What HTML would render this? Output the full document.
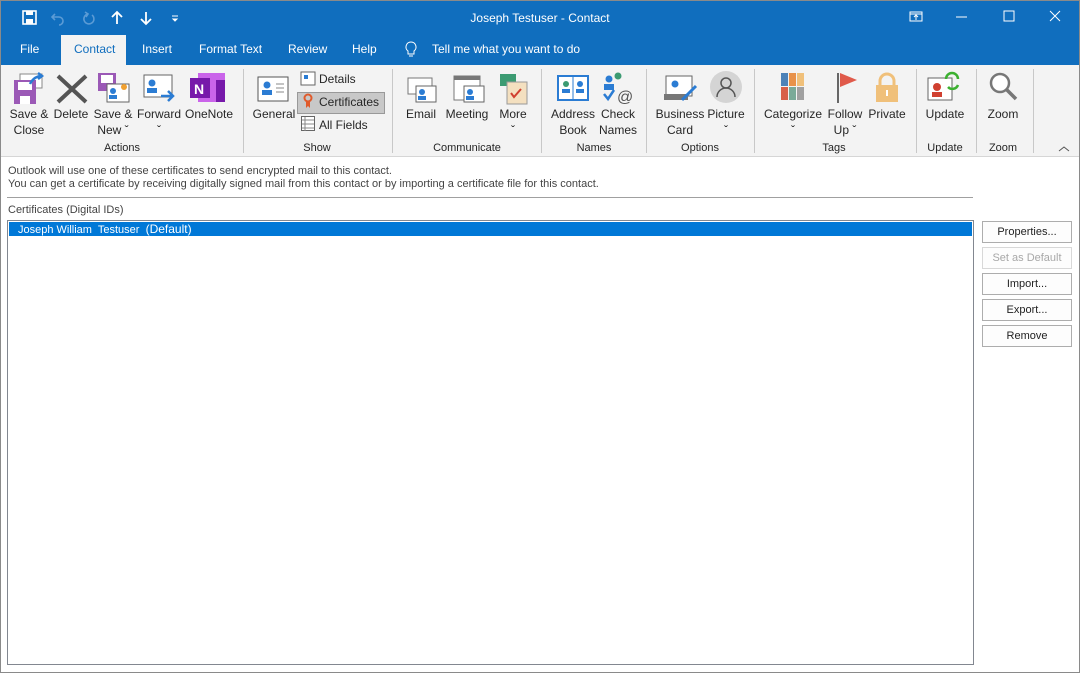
<!DOCTYPE html>
<html><head><meta charset="utf-8"><style>
*{margin:0;padding:0;box-sizing:border-box}
body{width:1080px;height:673px;position:relative;overflow:hidden;background:#fff;font-family:"Liberation Sans",sans-serif;color:#262626}
.a{position:absolute}
.t{position:absolute;font-size:12px;white-space:nowrap;text-align:center;transform:translateX(-50%);line-height:16px}
.g{position:absolute;font-size:11px;transform:translateX(-50%);color:#262626;top:142px}
.sep{position:absolute;top:69px;width:1px;height:84px;background:#c8c8c8}
.tab{position:absolute;top:42px;font-size:12px;color:#fff;white-space:nowrap}
.btn{position:absolute;left:982px;width:90px;height:22px;border:1px solid #adadad;background:#fdfdfd;font-size:11px;text-align:center;line-height:20px;color:#222}
</style></head><body>
<div class="a" style="left:0;top:0;width:1080px;height:673px;border:1px solid #8a8a8a;z-index:5;pointer-events:none"></div>
<div class="a" style="left:0;top:0;width:1080px;height:65px;background:#106ebe"></div>
<svg class="a" style="left:20px;top:9px" width="170" height="18" viewBox="0 0 170 18">
<rect x="3" y="2" width="13" height="13" fill="none" stroke="#fff" stroke-width="1.6"/><rect x="6" y="2" width="7" height="4" fill="#fff"/><rect x="6" y="10" width="7" height="5" fill="#fff"/>
<path d="M35 5 l-3 3 3 3 M32 8 h7 a4 4 0 0 1 0 8" fill="none" stroke="#5b9bd5" stroke-width="1.6"/>
<path d="M72 6 a5 5 0 1 1 -4 -1 M65 3 l3 2 -2 3" fill="none" stroke="#5b9bd5" stroke-width="1.6"/>
<path d="M97 15 V3 M92 8 l5 -5 5 5" fill="none" stroke="#fff" stroke-width="1.8"/>
<path d="M126 3 V15 M121 10 l5 5 5 -5" fill="none" stroke="#fff" stroke-width="1.8"/>
<path d="M152 7 h6 M153 10 l2 2 2 -2z" fill="#fff" stroke="#fff"/>
</svg>
<div class="a" style="left:0;width:1080px;top:11px;text-align:center;color:#fff;font-size:12px">Joseph Testuser - Contact</div>
<svg class="a" style="left:905px;top:9px" width="160" height="16">
<rect x="5" y="3" width="12" height="9" fill="none" stroke="#fff"/><path d="M11 11 V6 M9 8 l2 -2 2 2 M5 5 h12" stroke="#fff" fill="none"/>
<path d="M51 8 h11" stroke="#fff"/>
<rect x="99" y="2" width="10" height="10" fill="none" stroke="#fff"/>
<path d="M145 2 l10 10 M155 2 l-10 10" stroke="#fff"/>
</svg>
<div class="a" style="left:61px;top:35px;width:65px;height:30px;background:#f3f3f3"></div>
<div class="tab" style="left:20px">File</div>
<div class="tab" style="left:74px;color:#106ebe">Contact</div>
<div class="tab" style="left:142px">Insert</div>
<div class="tab" style="left:199px">Format Text</div>
<div class="tab" style="left:288px">Review</div>
<div class="tab" style="left:352px">Help</div>
<svg class="a" style="left:404px;top:41px" width="14" height="18"><path d="M7 1 a5 5 0 0 1 3 9 v3 h-6 v-3 a5 5 0 0 1 3 -9z M5 15 h4" fill="none" stroke="#fff"/></svg>
<div class="tab" style="left:432px">Tell me what you want to do</div>
<div class="a" style="left:0;top:65px;width:1080px;height:92px;background:#f3f3f3;border-bottom:1px solid #d6d6d6"></div>
<div class="a" style="left:297px;top:92px;width:88px;height:22px;background:#c8c8c8;border:1px solid #999"></div>
<svg class="a" style="left:0;top:70px" width="1080" height="38">
<rect x="20" y="4" width="22" height="14" fill="#fff" stroke="#888"/><rect x="14" y="10" width="22" height="24" fill="#9b59b6"/><rect x="18" y="12" width="14" height="8" fill="#fff"/><rect x="20" y="26" width="10" height="8" fill="#fff"/><path d="M30 14 q4 -8 12 -8 M38 3 l4 3 -4 3" stroke="#2b7cd3" stroke-width="2.5" fill="none"/>
<path d="M58 6 L86 32 M86 6 L58 32" stroke="#555" stroke-width="4"/>
<rect x="98" y="3" width="18" height="18" fill="#9b59b6"/><rect x="101" y="5" width="12" height="8" fill="#fff"/><rect x="107" y="14" width="22" height="18" fill="#fff" stroke="#666"/><circle cx="113" cy="21" r="3" fill="#2b7cd3"/><rect x="109" y="25" width="8" height="4" fill="#2b7cd3"/><circle cx="124" cy="17" r="3" fill="#f0a030"/>
<rect x="144" y="5" width="28" height="22" fill="#fff" stroke="#666"/><circle cx="152" cy="13" r="3.5" fill="#2b7cd3"/><rect x="147" y="18" width="10" height="5" fill="#2b7cd3"/><path d="M161 26 h12 M168 21 l5 5 -5 5" stroke="#2b7cd3" stroke-width="2.5" fill="none"/>
<rect x="198" y="3" width="27" height="29" fill="#ca64ea"/><rect x="216" y="10" width="9" height="22" fill="#7719aa"/><rect x="190" y="8" width="20" height="20" fill="#7719aa"/><text x="194" y="24" fill="#fff" font-size="14" font-weight="bold" font-family="Liberation Sans">N</text>
<rect x="258" y="7" width="30" height="24" fill="#fff" stroke="#555"/><circle cx="267" cy="15" r="3.5" fill="#2b7cd3"/><rect x="262" y="20" width="10" height="5" fill="#2b7cd3"/><path d="M276 14 h8 M276 18 h8 M276 22 h8" stroke="#888"/>
<rect x="301" y="2" width="14" height="13" fill="#fff" stroke="#666"/><rect x="304" y="5" width="4" height="4" fill="#2b7cd3"/>
<circle cx="308" cy="28" r="3.5" fill="none" stroke="#e05a2b" stroke-width="2"/><path d="M306 31 v7 l2-2 2 2 v-7" fill="#e05a2b"/>
<rect x="408" y="8" width="24" height="16" fill="#fff" stroke="#777"/><rect x="416" y="16" width="20" height="16" fill="#fff" stroke="#666"/><circle cx="422" cy="22" r="3" fill="#2b7cd3"/><rect x="418" y="26" width="8" height="4" fill="#2b7cd3"/>
<rect x="454" y="6" width="26" height="24" fill="#fff" stroke="#777"/><rect x="454" y="6" width="26" height="4" fill="#777"/><rect x="464" y="16" width="20" height="16" fill="#fff" stroke="#666"/><circle cx="470" cy="22" r="3" fill="#2b7cd3"/><rect x="466" y="26" width="8" height="4" fill="#2b7cd3"/>
<rect x="500" y="4" width="16" height="12" fill="#3c9b72"/><rect x="507" y="12" width="20" height="22" fill="#f4e0c0" stroke="#999"/><path d="M511 23 l3 4 7 -8" stroke="#d04030" stroke-width="2" fill="none"/>
<rect x="558" y="6" width="30" height="24" fill="#fff" stroke="#2b7cd3" stroke-width="2"/><path d="M573 6 v24" stroke="#2b7cd3"/><circle cx="566" cy="14" r="3" fill="#3c9b72"/><circle cx="580" cy="14" r="3" fill="#2b7cd3"/><rect x="562" y="19" width="8" height="4" fill="#2b7cd3"/><rect x="576" y="19" width="8" height="4" fill="#2b7cd3"/>
<circle cx="609" cy="9" r="3.5" fill="#2b7cd3"/><circle cx="618" cy="6" r="3.5" fill="#3c9b72"/><rect x="604" y="14" width="10" height="6" fill="#2b7cd3"/><path d="M604 24 l4 5 6 -9" stroke="#2b7cd3" stroke-width="2.5" fill="none"/><text x="617" y="32" font-size="16" fill="#555" font-family="Liberation Sans">@</text>
<rect x="666" y="6" width="26" height="20" fill="#fff" stroke="#666"/><circle cx="675" cy="14" r="3.5" fill="#2b7cd3"/><rect x="664" y="24" width="24" height="6" fill="#777"/><path d="M682 30 l14 -14" stroke="#2b7cd3" stroke-width="3"/>
<circle cx="726" cy="17" r="16" fill="#d4d4d4"/><circle cx="726" cy="13" r="5" fill="none" stroke="#555" stroke-width="1.5"/><path d="M717 27 a9 9 0 0 1 18 0" fill="none" stroke="#555" stroke-width="1.5"/>
<rect x="781" y="3" width="7" height="13" fill="#4d82b8"/><rect x="789" y="3" width="7" height="13" fill="#e8924a"/><rect x="797" y="3" width="7" height="13" fill="#f0c07a"/><rect x="781" y="17" width="7" height="13" fill="#d86048"/><rect x="789" y="17" width="7" height="13" fill="#7aaa98"/><rect x="797" y="17" width="7" height="13" fill="#a0a0a0"/>
<path d="M838 3 v30" stroke="#666" stroke-width="2"/><path d="M840 3 l17 7 -17 7z" fill="#e05a4a"/>
<path d="M880 16 v-5 a7 7 0 0 1 14 0 v5" fill="none" stroke="#f0c07a" stroke-width="3"/><rect x="876" y="15" width="22" height="17" fill="#f0c07a"/><rect x="886" y="20" width="2" height="6" fill="#fff"/>
<rect x="928" y="8" width="24" height="22" fill="#fff" stroke="#666"/><circle cx="937" cy="17" r="4" fill="#d04030"/><rect x="932" y="22" width="10" height="5" fill="#d04030"/><path d="M946 9 a6 6 0 0 1 12 0 M958 15 a6 6 0 0 1 -10 2" stroke="#3cb030" stroke-width="2.5" fill="none"/>
<circle cx="1000" cy="13" r="9" fill="#fff" stroke="#777" stroke-width="2.5"/><path d="M1007 20 l9 9" stroke="#777" stroke-width="3.5"/>
</svg>
<svg class="a" style="left:301px;top:116px" width="14" height="16"><rect x="0.5" y="0.5" width="13" height="14" fill="#fff" stroke="#666"/><path d="M1 4 h12 M1 8 h12 M1 12 h12 M4 1 v14" stroke="#888"/></svg>
<div class="t" style="left:29px;top:106px">Save &amp;<br>Close</div>
<div class="t" style="left:71px;top:106px">Delete</div>
<div class="t" style="left:113px;top:106px">Save &amp;<br>New ˇ</div>
<div class="t" style="left:159px;top:106px">Forward<br>ˇ</div>
<div class="t" style="left:209px;top:106px">OneNote</div>
<div class="g" style="left:122px">Actions</div>
<div class="sep" style="left:243px"></div>
<div class="t" style="left:274px;top:106px">General</div>
<div class="a" style="left:319px;top:72px;font-size:12px">Details</div>
<div class="a" style="left:319px;top:95px;font-size:12px">Certificates</div>
<div class="a" style="left:319px;top:118px;font-size:12px">All Fields</div>
<div class="g" style="left:317px">Show</div>
<div class="sep" style="left:392px"></div>
<div class="t" style="left:421px;top:106px">Email</div>
<div class="t" style="left:467px;top:106px">Meeting</div>
<div class="t" style="left:513px;top:106px">More<br>ˇ</div>
<div class="g" style="left:467px">Communicate</div>
<div class="sep" style="left:541px"></div>
<div class="t" style="left:573px;top:106px">Address<br>Book</div>
<div class="t" style="left:618px;top:106px">Check<br>Names</div>
<div class="g" style="left:594px">Names</div>
<div class="sep" style="left:646px"></div>
<div class="t" style="left:680px;top:106px">Business<br>Card</div>
<div class="t" style="left:726px;top:106px">Picture<br>ˇ</div>
<div class="g" style="left:700px">Options</div>
<div class="sep" style="left:754px"></div>
<div class="t" style="left:793px;top:106px">Categorize<br>ˇ</div>
<div class="t" style="left:845px;top:106px">Follow<br>Up ˇ</div>
<div class="t" style="left:887px;top:106px">Private</div>
<div class="g" style="left:834px">Tags</div>
<div class="sep" style="left:916px"></div>
<div class="t" style="left:945px;top:106px">Update</div>
<div class="g" style="left:945px">Update</div>
<div class="sep" style="left:976px"></div>
<div class="t" style="left:1003px;top:106px">Zoom</div>
<div class="g" style="left:1003px">Zoom</div>
<div class="sep" style="left:1033px"></div>
<svg class="a" style="left:1058px;top:145px" width="12" height="8"><path d="M1 6 l5 -4 5 4" stroke="#555" fill="none"/></svg>
<div class="a" style="left:8px;top:165px;font-size:11px;line-height:13px;color:#444">Outlook will use one of these certificates to send encrypted mail to this contact.<br>You can get a certificate by receiving digitally signed mail from this contact or by importing a certificate file for this contact.</div>
<div class="a" style="left:7px;top:197px;width:966px;height:1px;background:#a0a0a0"></div>
<div class="a" style="left:8px;top:204px;font-size:11px;color:#444">Certificates (Digital IDs)</div>
<div class="a" style="left:7px;top:220px;width:967px;height:445px;border:1px solid #828790;background:#fff"></div>
<div class="a" style="left:9px;top:222px;width:963px;height:14px;background:#0078d7;color:#fff;font-size:11px;line-height:14px;padding-left:9px">Joseph William&nbsp; Testuser&nbsp; <span style="font-size:12px">(Default)</span></div>
<div class="btn" style="top:221px">Properties...</div>
<div class="btn" style="top:247px;color:#a8a8a8;border-color:#d8d8d8">Set as Default</div>
<div class="btn" style="top:273px">Import...</div>
<div class="btn" style="top:299px">Export...</div>
<div class="btn" style="top:325px">Remove</div>
</body></html>
